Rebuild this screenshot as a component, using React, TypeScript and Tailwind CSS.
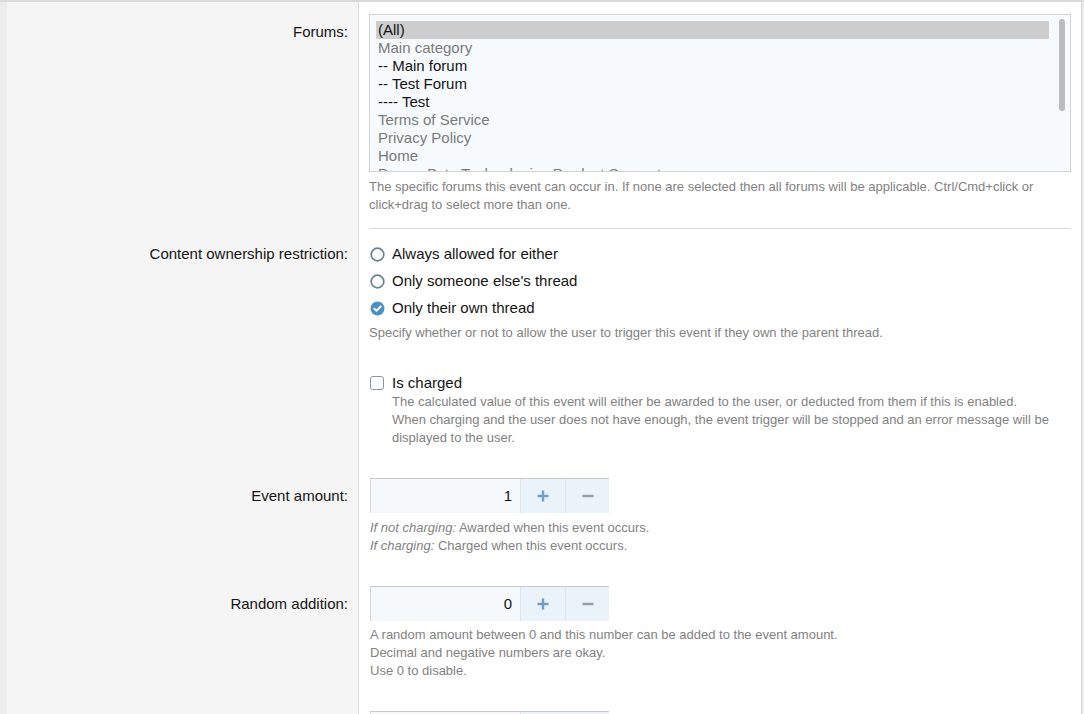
import React from "react";

const font = { fontFamily: '"Liberation Sans", Arial, Helvetica, sans-serif' };

function Radio({ checked }: { checked?: boolean }) {
  if (checked) {
    return (
      <svg width="15" height="15" viewBox="0 0 14 14" className="shrink-0">
        <circle cx="7" cy="7" r="6.5" fill="#4a8fc9" />
        <path d="M4 7.2 L6.1 9.2 L10 5" stroke="#fff" strokeWidth="1.8" fill="none" strokeLinecap="round" strokeLinejoin="round" />
      </svg>
    );
  }
  return (
    <svg width="15" height="15" viewBox="0 0 14 14" className="shrink-0">
      <circle cx="7" cy="7" r="5.9" fill="#fff" stroke="#6d8290" strokeWidth="1.6" />
    </svg>
  );
}

function Label({ text, pt }: { text: string; pt: string }) {
  return (
    <div className={`w-[352px] shrink-0 bg-[#f5f5f5] border-r border-[#dcdcdc] pr-[10px] text-right text-[15px] leading-[18px] text-[#141414] ${pt}`}>
      {text}
    </div>
  );
}

function NumberBox({ value }: { value: string }) {
  return (
    <div className="flex w-[239px] h-[35px] border-t border-[#c9c9c9]">
      <div className="w-[150px] bg-[#f6f9fc] border-l border-[#d6d6d6] flex items-center justify-end pr-[8px] text-[15px] text-[#141414]">
        {value}
      </div>
      <div className="w-[45px] bg-[#eaf2fa] border-l border-[#dde6ee] flex items-center justify-center">
        <svg width="12" height="12" viewBox="0 0 12 12">
          <rect x="4.8" y="0.5" width="2.4" height="11" fill="#6f9dc4" />
          <rect x="0.5" y="4.8" width="11" height="2.4" fill="#6f9dc4" />
        </svg>
      </div>
      <div className="w-[44px] bg-[#eaf2fa] border-l border-[#dde6ee] flex items-center justify-center">
        <svg width="12" height="12" viewBox="0 0 12 12">
          <rect x="0.5" y="4.8" width="11" height="2.4" fill="#929ea8" />
        </svg>
      </div>
    </div>
  );
}

const options: { t: string; cat?: boolean; sel?: boolean }[] = [
  { t: "(All)", sel: true },
  { t: "Main category", cat: true },
  { t: "-- Main forum" },
  { t: "-- Test Forum" },
  { t: "---- Test" },
  { t: "Terms of Service", cat: true },
  { t: "Privacy Policy", cat: true },
  { t: "Home", cat: true },
  { t: "DragonByte Technologies Product Support", cat: true },
];

const hint = "text-[13px] leading-[18px] text-[#828282] whitespace-nowrap";

export default function App() {
  return (
    <div style={font} className="w-[1084px] h-[714px] overflow-hidden bg-[#ececec] border-t-2 border-[#dadada] flex">
      <div className="w-[7px] shrink-0 bg-[#ededed]" />
      <div className="w-[1075px] shrink-0 flex flex-col bg-white border-r border-[#d6d6d6]">
        {/* Forums row */}
        <div className="flex">
          <Label text="Forums:" pt="pt-[21px]" />
          <div className="flex-1 pl-[10px] mr-[10px]">
            <div className="border-b border-[#dcdcdc] pt-[12px] pb-[14px]">
              <div className="relative w-[702px] h-[158px] border border-[#d4d4d4] bg-[#f7fafd] overflow-hidden pl-[6px] pt-[6px]">
                {options.map((o) => (
                  <div
                    key={o.t}
                    className={`h-[18px] leading-[18px] text-[15px] pl-[2px] whitespace-nowrap ${
                      o.sel ? "bg-[#cdcdcd] w-[673px] text-[#111]" : o.cat ? "text-[#7a7a7a]" : "text-[#141414]"
                    }`}
                  >
                    {o.t}
                  </div>
                ))}
                <div className="absolute right-[5px] top-[4px] w-[6px] h-[92px] rounded-[3px] bg-[#bdbdbd]" />
              </div>
              <div className={`mt-[6px] ${hint}`}>
                <div>The specific forums this event can occur in. If none are selected then all forums will be applicable. Ctrl/Cmd+click or</div>
                <div>click+drag to select more than one.</div>
              </div>
            </div>
          </div>
        </div>

        {/* Content ownership row */}
        <div className="flex">
          <Label text="Content ownership restriction:" pt="pt-[16px]" />
          <div className="flex-1 pl-[11px] pt-[16px] text-[15px] leading-[18px] text-[#141414]">
            <div className="flex flex-col gap-[9px]">
              <div className="flex items-center gap-[7px]"><Radio /><span>Always allowed for either</span></div>
              <div className="flex items-center gap-[7px]"><Radio /><span>Only someone else's thread</span></div>
              <div className="flex items-center gap-[7px]"><Radio checked /><span>Only their own thread</span></div>
            </div>
            <div className={`mt-[7px] ml-[-1px] ${hint}`}>
              Specify whether or not to allow the user to trigger this event if they own the parent thread.
            </div>
            <div className="mt-[32px] flex items-center gap-[8px]">
              <div className="w-[14px] h-[14px] rounded-[3px] border-[1.5px] border-[#8a949b] bg-white shrink-0" />
              <span>Is charged</span>
            </div>
            <div className={`mt-[1px] pl-[22px] ${hint}`}>
              <div>The calculated value of this event will either be awarded to the user, or deducted from them if this is enabled.</div>
              <div>When charging and the user does not have enough, the event trigger will be stopped and an error message will be</div>
              <div>displayed to the user.</div>
            </div>
          </div>
        </div>

        {/* Event amount */}
        <div className="flex">
          <Label text="Event amount:" pt="pt-[40px]" />
          <div className="flex-1 pl-[11px] pt-[31px]">
            <NumberBox value="1" />
            <div className={`mt-[6px] ${hint}`}>
              <div><i>If not charging:</i> Awarded when this event occurs.</div>
              <div><i>If charging:</i> Charged when this event occurs.</div>
            </div>
          </div>
        </div>

        {/* Random addition */}
        <div className="flex">
          <Label text="Random addition:" pt="pt-[40px]" />
          <div className="flex-1 pl-[11px] pt-[31px]">
            <NumberBox value="0" />
            <div className={`mt-[5px] ${hint}`}>
              <div>A random amount between 0 and this number can be added to the event amount.</div>
              <div>Decimal and negative numbers are okay.</div>
              <div>Use 0 to disable.</div>
            </div>
          </div>
        </div>

        {/* Next row */}
        <div className="flex flex-1">
          <Label text="" pt="pt-[40px]" />
          <div className="flex-1 pl-[11px] pt-[31px]">
            <div className="w-[239px] h-[35px] border-t border-[#c9c9c9] flex">
              <div className="w-[150px] bg-[#f6f9fc] border-l border-[#d6d6d6]" />
              <div className="w-[89px] bg-[#eaf2fa] border-l border-[#dde6ee]" />
            </div>
          </div>
        </div>
      </div>
    </div>
  );
}
